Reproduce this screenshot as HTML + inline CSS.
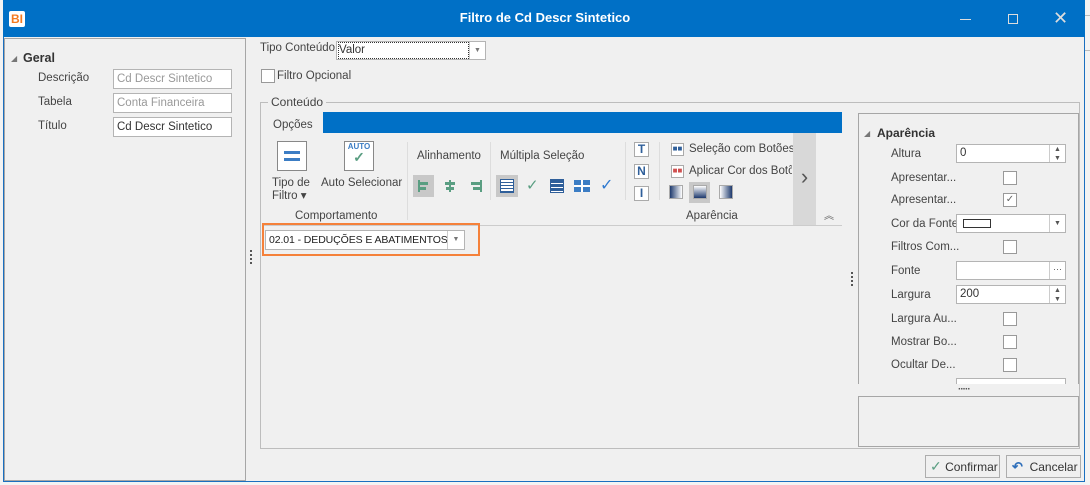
<!DOCTYPE html>
<html><head><meta charset="utf-8"><style>
*{box-sizing:border-box;margin:0;padding:0}
body{width:1090px;height:485px;background:#f0f0f0;font-family:"Liberation Sans",sans-serif;font-size:12px;color:#333;position:relative;overflow:hidden}
.a{position:absolute}
.inp{position:absolute;background:#fff;border:1px solid #b4b4b4;height:20px;padding:0 3px;line-height:18px;font-size:11.5px;white-space:nowrap;overflow:hidden}
.lbl{position:absolute;font-size:11.5px;color:#444;white-space:nowrap}
.cb{position:absolute;width:14px;height:14px;border:1px solid #999;background:#fff}
.sp{position:absolute;width:16px;border-left:1px solid #ccc;right:0;top:0;bottom:0;font-size:7px;color:#555;text-align:center;line-height:9px}
</style></head><body>
<div class="a" style="left:0;top:0;width:1090px;height:485px;background:#f3f3f3"></div>
<div class="a" style="left:1084px;top:15px;width:6px;height:1px;background:#bbb"></div>
<div class="a" style="left:1084px;top:50px;width:6px;height:1px;background:#bbb"></div>
<div class="a" style="left:3px;top:0;width:1082px;height:482px;background:#f0f0f0;border:1px solid #1a6fc0"></div>
<div class="a" style="left:3px;top:0;width:1082px;height:37px;background:#0070c6"></div>
<div class="a" style="left:9px;top:11px;width:16px;height:16px;background:#fff;border-radius:2px;color:#f47a20;font-weight:bold;font-size:12px;line-height:16px;text-align:center">BI</div>
<div class="a" style="left:0;top:10px;width:1090px;text-align:center;color:#fff;font-weight:bold;font-size:13px">Filtro de Cd Descr Sintetico</div>
<div class="a" style="left:960px;top:19px;width:11px;height:1px;background:#ddd"></div>
<div class="a" style="left:1008px;top:14px;width:10px;height:10px;border:1px solid #ddd"></div>
<div class="a" style="left:1053px;top:8px;color:#ddd;font-size:18px">✕</div>
<div class="a" style="left:4px;top:38px;width:242px;height:443px;border:1px solid #a6a6a6;background:#f0f0f0"></div>
<div class="a" style="left:11px;top:54px;font-size:8px;color:#777">◢</div>
<div class="a" style="left:23px;top:51px;font-weight:bold;font-size:12.5px">Geral</div>
<div class="lbl" style="left:38px;top:72px">Descrição</div>
<div class="inp" style="left:113px;top:69px;width:119px;color:#999">Cd Descr Sintetico</div>
<div class="lbl" style="left:38px;top:96px">Tabela</div>
<div class="inp" style="left:113px;top:93px;width:119px;color:#999">Conta Financeira</div>
<div class="lbl" style="left:38px;top:120px">Título</div>
<div class="inp" style="left:113px;top:117px;width:119px">Cd Descr Sintetico</div>
<div class="a" style="left:250px;top:250px;width:2px;height:14px;border-left:2px dotted #555"></div>
<div class="lbl" style="left:260px;top:42px">Tipo Conteúdo</div>
<div class="inp" style="left:336px;top:41px;width:150px;height:19px;padding:1px 2px;line-height:15px"><span style="outline:1px dotted #333;display:inline-block;width:129px">Valor</span></div>
<div class="a" style="left:469px;top:42px;width:16px;height:17px;border-left:1px solid #ccc;font-size:7px;color:#777;text-align:center;line-height:17px">▼</div>
<div class="cb" style="left:261px;top:69px"></div>
<div class="lbl" style="left:277px;top:70px">Filtro Opcional</div>
<div class="a" style="left:260px;top:102px;width:820px;height:347px;border:1px solid #bdbdbd"></div>
<div class="lbl" style="left:268px;top:95px;background:#f0f0f0;padding:0 3px;font-size:12px">Conteúdo</div>
<div class="lbl" style="left:273px;top:119px">Opções</div>
<div class="a" style="left:323px;top:112px;width:519px;height:21px;background:#0070c6"></div>
<div class="a" style="left:262px;top:225px;width:580px;height:1px;background:#ccc"></div>
<div class="a" style="left:277px;top:141px;width:30px;height:30px;border:1px solid #888;background:#fff"></div>
<div class="a" style="left:284px;top:151px;width:16px;height:3px;background:#3c7dc4"></div>
<div class="a" style="left:284px;top:158px;width:16px;height:3px;background:#3c7dc4"></div>
<div class="lbl" style="left:272px;top:177px;line-height:13px">Tipo de<br>Filtro ▾</div>
<div class="a" style="left:344px;top:141px;width:30px;height:30px;border:1px solid #888;background:#fff;font-size:8px;font-weight:bold;color:#3c7dc4;text-align:center;line-height:10px">AUTO<br><span style="color:#5a9e82;font-size:14px">✓</span></div>
<div class="lbl" style="left:321px;top:177px">Auto Selecionar</div>
<div class="lbl" style="left:295px;top:210px">Comportamento</div>
<div class="a" style="left:407px;top:142px;width:1px;height:78px;background:#ddd"></div>
<div class="lbl" style="left:417px;top:150px">Alinhamento</div>
<div class="a" style="left:413px;top:175px;width:21px;height:22px;background:#c8c8c8"></div>
<div class="a" style="left:418px;top:180px;width:2px;height:12px;background:#5a9e82"></div>
<div class="a" style="left:420px;top:182px;width:8px;height:3px;background:#5a9e82"></div>
<div class="a" style="left:420px;top:187px;width:6px;height:3px;background:#5a9e82"></div>
<div class="a" style="left:449px;top:180px;width:2px;height:12px;background:#5a9e82"></div>
<div class="a" style="left:445px;top:182px;width:10px;height:3px;background:#5a9e82"></div>
<div class="a" style="left:446px;top:187px;width:8px;height:3px;background:#5a9e82"></div>
<div class="a" style="left:480px;top:180px;width:2px;height:12px;background:#5a9e82"></div>
<div class="a" style="left:471px;top:182px;width:9px;height:3px;background:#5a9e82"></div>
<div class="a" style="left:473px;top:187px;width:7px;height:3px;background:#5a9e82"></div>
<div class="a" style="left:490px;top:142px;width:1px;height:58px;background:#ddd"></div>
<div class="lbl" style="left:500px;top:150px">Múltipla Seleção</div>
<div class="a" style="left:496px;top:175px;width:22px;height:22px;background:#c8c8c8"></div>
<div class="a" style="left:500px;top:179px;width:14px;height:14px;border:1px solid #2f5f9a;background:repeating-linear-gradient(#fff 0 2px,#2f5f9a 2px 3px)"></div>
<div class="a" style="left:526px;top:176px;color:#5a9e82;font-size:15px">✓</div>
<div class="a" style="left:550px;top:179px;width:14px;height:14px;background:repeating-linear-gradient(#2f5f9a 0 3px,#fff 3px 4px);border:1px solid #2f5f9a"></div>
<div class="a" style="left:574px;top:180px;width:16px;height:12px;background:linear-gradient(90deg,transparent 7px,#fff 7px 9px,transparent 9px),linear-gradient(transparent 5px,#fff 5px 7px,transparent 7px),#3c7dc4"></div>
<div class="a" style="left:600px;top:175px;color:#2f7ad0;font-size:16px">✓</div>
<div class="a" style="left:625px;top:142px;width:1px;height:58px;background:#ddd"></div>
<div class="a" style="left:634px;top:142px;width:15px;height:15px;border:1px solid #aaa;background:#fff;color:#2f5f9a;font-weight:bold;font-size:12px;text-align:center;line-height:13px">T</div>
<div class="a" style="left:634px;top:164px;width:15px;height:15px;border:1px solid #aaa;background:#fff;color:#2f5f9a;font-weight:bold;font-size:12px;text-align:center;line-height:13px">N</div>
<div class="a" style="left:634px;top:186px;width:15px;height:15px;border:1px solid #aaa;background:#fff;color:#2f5f9a;font-weight:bold;font-size:12px;text-align:center;line-height:13px">I</div>
<div class="a" style="left:659px;top:142px;width:1px;height:58px;background:#ddd"></div>
<div class="a" style="left:671px;top:143px;width:13px;height:13px;border:1px solid #aaa;background:#fff;font-size:8px;color:#2f5f9a;line-height:10px;text-align:center">■■</div>
<div class="lbl" style="left:689px;top:143px">Seleção com Botões</div>
<div class="a" style="left:671px;top:165px;width:13px;height:13px;border:1px solid #aaa;background:#fff;font-size:8px;color:#d05050;line-height:10px;text-align:center">■■</div>
<div class="lbl" style="left:689px;top:165px;width:103px;overflow:hidden">Aplicar Cor dos Botões</div>
<div class="a" style="left:669px;top:185px;width:14px;height:14px;border:1px solid #aaa;background:linear-gradient(90deg,#1e3a6e,#fff)"></div>
<div class="a" style="left:689px;top:182px;width:21px;height:21px;background:#c8c8c8"></div>
<div class="a" style="left:693px;top:185px;width:14px;height:14px;border:1px solid #aaa;background:linear-gradient(#fff,#1e3a6e)"></div>
<div class="a" style="left:719px;top:185px;width:14px;height:14px;border:1px solid #aaa;background:linear-gradient(270deg,#1e3a6e,#fff)"></div>
<div class="lbl" style="left:686px;top:210px">Aparência</div>
<div class="a" style="left:793px;top:133px;width:23px;height:92px;background:#d8d8d8;color:#555;font-size:22px;text-align:center;line-height:88px">›</div>
<div class="a" style="left:824px;top:207px;color:#666;font-size:10px">︽</div>
<div class="a" style="left:262px;top:223px;width:218px;height:33px;border:2px solid #f5813a"></div>
<div class="inp" style="left:265px;top:230px;width:200px;height:20px;font-size:10.5px;color:#222;padding-left:3px;letter-spacing:-0.1px">02.01 - DEDUÇÕES E ABATIMENTOS</div>
<div class="a" style="left:447px;top:231px;width:17px;height:18px;border-left:1px solid #ccc;background:#fff;font-size:7px;color:#777;text-align:center;line-height:18px">▼</div>
<div class="a" style="left:851px;top:272px;width:2px;height:14px;border-left:2px dotted #555"></div>
<div class="a" style="left:858px;top:113px;width:221px;height:271px;border:1px solid #a6a6a6;border-bottom:none"></div>
<div class="a" style="left:864px;top:129px;font-size:8px;color:#777">◢</div>
<div class="a" style="left:877px;top:126px;font-weight:bold;font-size:12px">Aparência</div>
<div class="lbl" style="left:891px;top:148px">Altura</div>
<div class="inp" style="left:956px;top:144px;width:110px;height:19px;line-height:17px">0<div class="sp">▲<br>▼</div></div>
<div class="lbl" style="left:891px;top:172px">Apresentar...</div>
<div class="cb" style="left:1003px;top:171px"></div>
<div class="lbl" style="left:891px;top:194px">Apresentar...</div>
<div class="cb" style="left:1003px;top:193px;font-size:10px;color:#666;line-height:12px;text-align:center">✓</div>
<div class="lbl" style="left:891px;top:218px">Cor da Fonte</div>
<div class="inp" style="left:956px;top:214px;width:110px;height:19px"><div class="a" style="left:6px;top:4px;width:28px;height:9px;border:1px solid #333"></div><div class="sp" style="line-height:17px">▼</div></div>
<div class="lbl" style="left:891px;top:241px">Filtros Com...</div>
<div class="cb" style="left:1003px;top:240px"></div>
<div class="lbl" style="left:891px;top:265px">Fonte</div>
<div class="inp" style="left:956px;top:261px;width:110px;height:19px"><div class="sp" style="line-height:14px;font-size:9px">···</div></div>
<div class="lbl" style="left:891px;top:289px">Largura</div>
<div class="inp" style="left:956px;top:285px;width:110px;height:19px;line-height:17px">200<div class="sp">▲<br>▼</div></div>
<div class="lbl" style="left:891px;top:313px">Largura Au...</div>
<div class="cb" style="left:1003px;top:312px"></div>
<div class="lbl" style="left:891px;top:336px">Mostrar Bo...</div>
<div class="cb" style="left:1003px;top:335px"></div>
<div class="lbl" style="left:891px;top:359px">Ocultar De...</div>
<div class="cb" style="left:1003px;top:358px"></div>
<div class="a" style="left:956px;top:378px;width:110px;height:6px;background:#fff;border:1px solid #b4b4b4;border-bottom:none"></div>
<div class="a" style="left:958px;top:384px;font-size:10px;color:#555;letter-spacing:-1px;font-weight:bold">·····</div>
<div class="a" style="left:858px;top:396px;width:221px;height:51px;border:1px solid #a6a6a6"></div>
<div class="a" style="left:925px;top:455px;width:75px;height:23px;border:1px solid #adadad;background:#f0f0f0;font-size:12px;line-height:21px;padding-left:4px"><span style="color:#5a9e82;font-size:14px">✓</span> Confirmar</div>
<div class="a" style="left:1006px;top:455px;width:75px;height:23px;border:1px solid #adadad;background:#f0f0f0;font-size:12px;line-height:21px;padding-left:5px"><span style="color:#2f6fba;font-size:13px;font-weight:bold">↶</span>&nbsp; Cancelar</div>
</body></html>
